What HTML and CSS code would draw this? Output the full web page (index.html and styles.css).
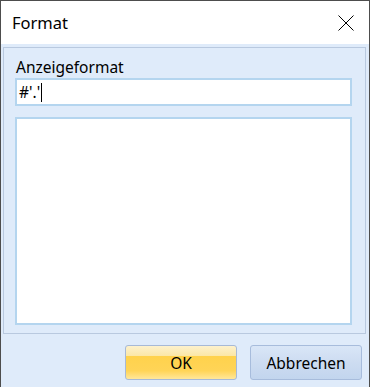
FILE: index.html
```html
<!DOCTYPE html>
<html lang="de">
<head>
  <meta charset="UTF-8" />
  <title>Format</title>
  <link rel="stylesheet" href="styles.css">
</head>
<body>
  <div class="window">
    <div class="titlebar">
      <span class="title">Format</span>
      <button class="close" aria-label="Schließen">
        <svg width="16" height="16" viewBox="0 0 16 16">
          <path d="M0.5 0.5 L15.5 15.5 M15.5 0.5 L0.5 15.5" stroke="#000" stroke-width="1" fill="none"/>
        </svg>
      </button>
    </div>
    <div class="body">
      <div class="panel">
        <label class="label" for="fmt">Anzeigeformat</label>
        <div class="input"><span id="fmt">#'.'</span><span class="caret"></span></div>
        <div class="list"></div>
      </div>
      <div class="buttons">
        <button class="btn ok">OK</button>
        <button class="btn cancel">Abbrechen</button>
      </div>
    </div>
  </div>
</body>
</html>
```

FILE: styles.css
```css
:root {
  --frame: #4d4d4d;
  --body-bg: #dfebfa;
  --panel-line: #b9c9df;
  --field-line: #b4d5ef;
}
* { box-sizing: border-box; }
body {
  margin: 0; font-family: 'Noto Sans', sans-serif; font-size: 15.5px; color: #000;
}
.window {
  width: 370px; height: 387px; border: 1px solid var(--frame);
  display: flex; flex-direction: column; background: #fff;
}
.titlebar {
  height: 43px; flex-shrink: 0; display: flex; align-items: center;
  justify-content: space-between; padding: 0 15px 0 11px;
}
.title { font-size: 16.5px; }
.close {
  background: none; border: none; padding: 0; width: 16px; height: 16px;
  display: flex;
}
.body {
  flex-grow: 1; background: var(--body-bg); display: flex; flex-direction: column;
  padding: 3px 3px 7px 2px;
}
.panel {
  height: 287px; border: 1px solid var(--panel-line); padding: 8px 13px 8px 11px;
  display: flex; flex-direction: column;
}
.label { line-height: 22px; height: 22px; padding-left: 1px; }
.input {
  height: 28px; background: #fff; border: 2px solid var(--field-line);
  display: flex; align-items: center; padding-left: 2px;
}
.caret { width: 1px; height: 19px; background: #000; margin-left: 1px; }
.list {
  margin-top: 11px; flex-grow: 1; background: #fff; border: 2px solid var(--field-line);
}
.buttons {
  display: flex; justify-content: flex-end; gap: 13px; margin-top: 11px;
  padding-right: 4px;
}
.btn {
  width: 112px; height: 35px; font-family: inherit; font-size: 15.5px; color: #000;
  border-radius: 3px; padding: 0;
}
.ok {
  border: 1px solid #a7b9d6;
  background: linear-gradient(#fdf1cc 0%, #fbe7a6 30%, #ffd24c 31%, #ffd457 75%, #ffe79a 100%);
}
.cancel {
  border: 1px solid #a7bcdc;
  background: linear-gradient(#d9e6f7 0%, #cddcf1 50%, #c2d5ee 100%);
}
```
